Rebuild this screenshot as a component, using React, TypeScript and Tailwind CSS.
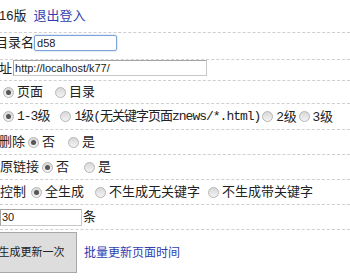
import React from "react";

const sans = "font-['Liberation_Sans','Noto_Sans_CJK_SC',sans-serif]";
const mono = "font-['Liberation_Mono','Noto_Sans_CJK_SC',monospace]";

function Radio({ checked = false }: { checked?: boolean }) {
  return (
    <span className="inline-flex items-center justify-center w-[11px] h-[11px] rounded-full border border-[#b5b5b5] bg-gradient-to-b from-[#d8d8d8] to-[#f4f4f4] shrink-0">
      {checked && <span className="w-[5px] h-[5px] rounded-full bg-[#555]" />}
    </span>
  );
}

function Opt({ checked, label, className = "" }: { checked?: boolean; label: React.ReactNode; className?: string }) {
  return (
    <label className={`inline-flex items-center gap-[3px] ${className}`}>
      <Radio checked={checked} />
      <span>{label}</span>
    </label>
  );
}

export default function App() {
  const row = "flex border-b border-dashed border-[#cfcfcf] whitespace-nowrap";
  return (
    <div className={`w-[350px] h-[280px] overflow-hidden bg-white text-[13px] text-[#222] ${sans}`}>
      {/* header */}
      <div className={`${row} h-[33px] items-center gap-[7px] -ml-[1px]`}>
        <span>16版</span>
        <a className="text-[#2f3db0]">退出登入</a>
      </div>

      {/* dir name */}
      <div className={`${row} h-[27px] items-center pb-[6px] -ml-[5px]`}>
        <span>目录名</span>
        <input
          defaultValue="d58"
          className="ml-[0px] w-[83px] h-[16px] px-[2px] text-[11px] border border-[#7da2d8] rounded-[2px] outline-none shadow-[0_0_2px_#9bbbe8]"
        />
      </div>

      {/* url */}
      <div className={`${row} h-[21px] items-start -ml-[1px]`}>
        <span className="mt-[-1px]">址</span>
        <input
          defaultValue="http://localhost/k77/"
          className="ml-[1px] w-[194px] h-[16px] px-[1px] text-[11px] border border-[#c8c8c8] border-t-[#a5a5a5] border-l-[#a5a5a5] outline-none"
        />
      </div>

      {/* type */}
      <div className={`${row} h-[23px] items-center pl-[3px]`}>
        <Opt checked label="页面" />
        <Opt label="目录" className="ml-[12px]" />
      </div>

      {/* level */}
      <div className={`${row} h-[26px] items-center pl-[3px]`}>
        <Opt checked label={<span className={mono + " tracking-[-1px]"}>1-3级</span>} />
        <Opt
          label={<span className={mono + " tracking-[-1px]"}>1级(无关键字页面znews/*.html)</span>}
          className="ml-[11px]"
        />
        <Opt label="2级" className="ml-[2px]" />
        <Opt label="3级" className="ml-[2px]" />
      </div>

      {/* delete */}
      <div className={`${row} h-[25px] items-center -ml-[1px]`}>
        <span>删除</span>
        <Opt checked label="否" className="ml-[3px]" />
        <Opt label="是" className="ml-[13px]" />
      </div>

      {/* original link */}
      <div className={`${row} h-[25px] items-center`}>
        <span>原链接</span>
        <Opt checked label="否" className="ml-[3px]" />
        <Opt label="是" className="ml-[15px]" />
      </div>

      {/* control */}
      <div className={`${row} h-[25px] items-center`}>
        <span>控制</span>
        <Opt checked label="全生成" className="ml-[5px]" />
        <Opt label="不生成无关键字" className="ml-[11px]" />
        <Opt label="不生成带关键字" className="ml-[8px]" />
      </div>

      {/* count */}
      <div className={`${row} h-[25px] items-center`}>
        <input
          defaultValue="30"
          className="w-[82px] h-[17px] px-[1px] text-[11px] border border-[#c8c8c8] border-t-[#a5a5a5] border-l-[#a5a5a5] outline-none"
        />
        <span className="ml-[1px]">条</span>
      </div>

      {/* actions */}
      <div className="flex items-center mt-[2px] -ml-[14px] whitespace-nowrap">
        <button className="w-[91px] h-[41px] bg-[#dddddd] border border-[#a8a8a8] text-[11px] text-[#222]">
          生成更新一次
        </button>
        <a className="ml-[7px] text-[12px] text-[#2f3db0]">批量更新页面时间</a>
      </div>
    </div>
  );
}
